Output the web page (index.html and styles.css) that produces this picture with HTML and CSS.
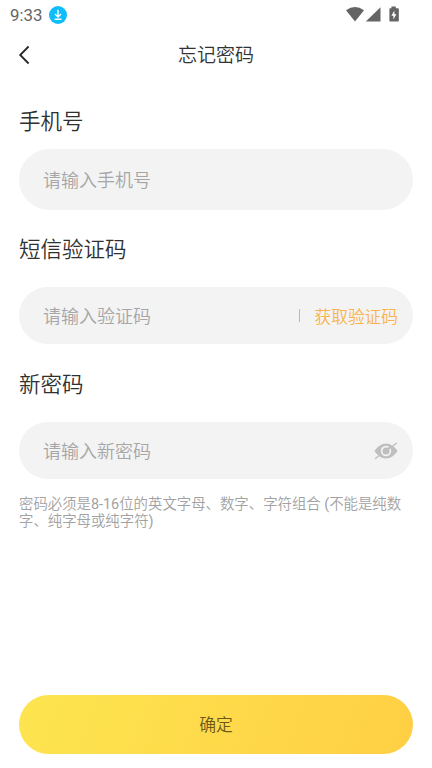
FILE: index.html
```html
<!DOCTYPE html>
<html lang="zh-CN">
<head>
<meta charset="utf-8">
<title>忘记密码</title>
<link rel="stylesheet" href="styles.css">
</head>
<body>
<div class="screen">
  <div class="status">
    <span class="time">9:33</span>
    <svg class="download" width="18" height="18" viewBox="0 0 18 18"><circle cx="9" cy="9" r="9" fill="#0fbdfb"/><path d="M9 3.7v7M6 8l3 3 3-3M5.6 13.2h6.8" fill="none" stroke="#fff" stroke-width="1.4"/></svg>
    <svg class="signals" width="54" height="18" viewBox="0 0 54 18" fill="#646464"><path d="M0 4.3Q9 -2.3 18 4.3L9 15.5z"/><path d="M34.5 1.2v14.3H19.8z"/><path fill-rule="evenodd" d="M45.4 .6h4.4v1.7h2.3q.7 0 .7.7v11.8q0 .7-.7.7h-8q-.7 0-.7-.7V3q0-.7.7-.7h1.3zM48.4 4.5L45.4 9.7h2v3.8l3-5.2h-2z"/></svg>
  </div>
  <header class="header">
    <svg class="back" width="12" height="20" viewBox="0 0 12 20"><path d="M10.6 1.5L2.2 10l8.4 8.5" fill="none" stroke="#282828" stroke-width="1.8"/></svg>
    <h1>忘记密码</h1>
  </header>
  <main class="form">
    <label class="label">手机号</label>
    <div class="field phone"><span>请输入手机号</span></div>
    <label class="label second">短信验证码</label>
    <div class="field"><span class="placeholder">请输入验证码</span><span class="divider"></span><span class="code">获取验证码</span></div>
    <label class="label third">新密码</label>
    <div class="field"><span class="placeholder">请输入新密码</span>
      <svg class="eye" width="24" height="18" viewBox="0 0 24 18"><path d="M.4 9Q5.5 1.5 12 1.5T23.6 9Q18.5 16.5 12 16.5T.4 9z" fill="#bfbfbf"/><circle cx="12" cy="9" r="4.4" fill="none" stroke="#f3f3f3" stroke-width="1.7"/><path d="M13.7 7.4l3-2.4" stroke="#bfbfbf" stroke-width="2.2"/><path d="M1 16.7L5 13.7M18.6 4.2L22.8 1" stroke="#bfbfbf" stroke-width="1.4"/></svg>
    </div>
    <p class="hint">密码必须是<span class="latin">8-16</span>位的英文字母、数字、字符组合 <span class="latin">(</span>不能是纯数<br>字、纯字母或纯字符<span class="latin">)</span></p>
  </main>
  <button class="submit">确定</button>
</div>
</body>
</html>
```
FILE: styles.css
```css
* { box-sizing: border-box; }
body { margin: 0; background: #fff; font-family: Roboto, "Noto Sans CJK SC", sans-serif; }
.screen { width: 432px; height: 768px; display: flex; flex-direction: column; padding-bottom: 14px; overflow: hidden; }
.status { height: 30px; display: flex; align-items: center; padding: 0 32px 0 10px; }
.time { font-size: 16.8px; line-height: 30px; color: #646464; }
.download { margin-left: 7px; }
.signals { margin-left: auto; margin-top: -1px; }
.header { height: 50px; display: grid; grid-template-columns: 60px 1fr 60px; align-items: center; }
.back { margin-left: 18px; }
h1 { margin: 0; padding-top: 2px; font-size: 19px; font-weight: 350; line-height: 48px; text-align: center; color: #333; }
.form { padding: 25px 19px 0; font-weight: 350; }
.label { display: block; height: 32px; line-height: 33px; font-size: 21.5px; color: #303030; }
.field { height: 57px; margin-top: 22px; padding: 0 15px 0 24px; border-radius: 31px; background: #f3f3f3; display: flex; align-items: center; font-size: 18px; color: #a6a6a6; }
.phone { height: 60.5px; margin-top: 12px; }
.placeholder { padding-bottom: 2px; }
.second { margin-top: 23.5px; }
.third { margin-top: 24px; }
.divider { width: 1px; height: 13px; background: #b8b8b8; margin-left: auto; margin-right: 15px; }
.code { font-size: 16.7px; color: #f8b44a; }
.eye { margin-left: auto; }
.hint { margin: 17px 0 0; font-size: 14.4px; line-height: 17px; color: #a2a2a2; white-space: nowrap; }
.latin { font-weight: 400; }
.submit { height: 59px; flex: none; margin: auto 19px 0; padding: 0 0 2px; border: 0; border-radius: 30px; background: linear-gradient(110deg, #fde550, #ffcf43); font-family: inherit; font-size: 16.8px; font-weight: 350; color: #6d5a1a; }
```
